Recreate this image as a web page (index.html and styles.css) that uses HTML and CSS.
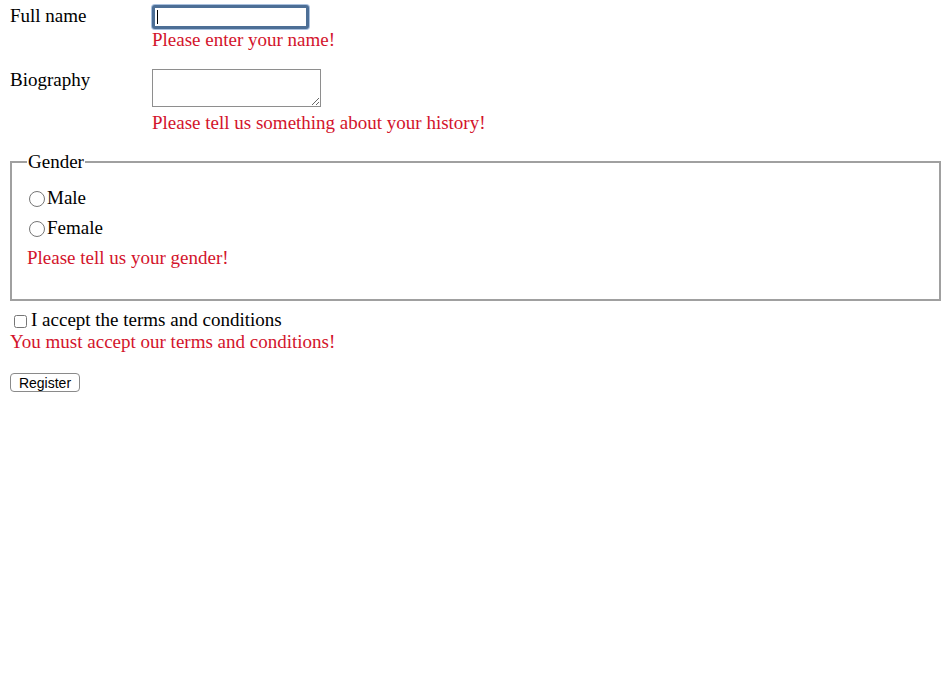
FILE: index.html
```html
<!DOCTYPE html>
<html>
<head>
<meta charset="utf-8">
<link rel="stylesheet" href="styles.css">
</head>
<body>
<form class="form">
  <div class="row row-name">
    <label class="label">Full name</label>
    <div class="field">
      <div class="text-input focused"><span class="caret"></span></div>
      <div class="error">Please enter your name!</div>
    </div>
  </div>
  <div class="row row-bio">
    <label class="label">Biography</label>
    <div class="field">
      <textarea class="bio"></textarea>
      <div class="error error-bio">Please tell us something about your history!</div>
    </div>
  </div>
  <fieldset class="gender">
    <legend class="legend">Gender</legend>
    <label class="radio-line"><input type="radio" name="g" class="radio">Male</label>
    <label class="radio-line"><input type="radio" name="g" class="radio">Female</label>
    <div class="error error-gender">Please tell us your gender!</div>
  </fieldset>
  <label class="check-line"><input type="checkbox" class="check">I accept the terms and conditions</label>
  <div class="error error-terms">You must accept our terms and conditions!</div>
  <button type="button" class="btn">Register</button>
</form>
</body>
</html>
```
FILE: styles.css
```css
html, body {
  margin: 0;
  padding: 0;
  background: #fff;
}
body {
  font-family: "Liberation Serif", "Times New Roman", serif;
  font-size: 19px;
  color: #000;
}
.form {
  padding: 5px 10px 0 10px;
  display: flex;
  flex-direction: column;
  align-items: flex-start;
}
.row {
  display: grid;
  grid-template-columns: 142px auto;
}
.label {
  line-height: 22px;
}
.row-bio { margin-top: 18px; }
.field {
  display: flex;
  flex-direction: column;
  align-items: flex-start;
}
.text-input {
  box-sizing: border-box;
  width: 157px;
  height: 24px;
  border: 3px solid #4d6f96;
  border-radius: 3px;
  box-shadow: 0 0 0 1px #a9c0de;
  background: #fff;
  position: relative;
}
.caret {
  position: absolute;
  left: 2px;
  top: 2px;
  width: 1px;
  height: 14px;
  background: #000;
}
.error {
  color: #d3142c;
  line-height: 22px;
}
.bio {
  box-sizing: border-box;
  width: 169px;
  height: 38px;
  border: 1px solid #8e8e8e;
  margin: 0;
  padding: 2px;
  font: inherit;
  display: block;
}
.error-bio { margin-top: 5px; }
.gender {
  box-sizing: border-box;
  margin: 18px 0 0 0;
  width: 931px;
  height: 149px;
  border: 2px solid #a0a0a0;
  padding: 11px 15px 10px 15px;
  display: flex;
  flex-direction: column;
  align-items: flex-start;
}
.legend {
  padding: 0 1px;
  margin-left: 0;
  line-height: 20px;
}
.radio-line {
  display: flex;
  align-items: center;
  height: 30px;
  line-height: 30px;
}
.radio {
  width: 16px;
  height: 16px;
  margin: 2px 2px 0 2px;
}
.error-gender { margin-top: 4px; }
.check-line {
  display: flex;
  align-items: center;
  margin-top: 8px;
  line-height: 22px;
}
.check {
  width: 13px;
  height: 13px;
  margin: 2px 4px 0 4px;
}
.btn {
  margin-top: 20px;
  box-sizing: border-box;
  width: 70px;
  height: 19px;
  padding: 0;
  font-family: "Liberation Sans", Arial, sans-serif;
  font-size: 14px;
  color: #000;
  background: #fff;
  border: 1px solid #8a8a8a;
  border-radius: 4px;
}
```
